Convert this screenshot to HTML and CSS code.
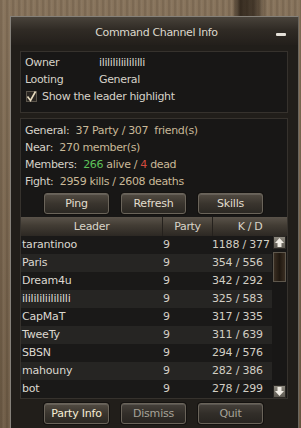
FILE: index.html
```html
<html>
    <head>
        <link rel="stylesheet" href="styles.css">
    </head>
    <body>
        <div class="window">
            <div class="titleBar">
                <span class="title">Command Channel Info</span>
                <span class="minimize"></span>
            </div>
            <div class="content">
                <div class="box infoBox">
                    <div class="line"><span class="label">Owner</span><span>ililililiilililli</span></div>
                    <div class="line"><span class="label">Looting</span><span>General</span></div>
                    <div class="line check">
                        <svg class="checkbox" width="11" height="11" viewBox="0 0 11 11">
                            <rect x="0.5" y="0.5" width="10" height="10" fill="#2a2622" stroke="#5c564c"/>
                            <path d="M1.5 5.5 L4.5 9.5 L9.5 0.5" fill="none" stroke="#e8dcc0" stroke-width="1.6"/>
                        </svg>
                        <span>Show the leader highlight</span>
                    </div>
                </div>
                <div class="box statsBox">
                    <div class="stats">
                        <div>General:&nbsp; <span class="val">37 Party / 307&nbsp; friend(s)</span></div>
                        <div>Near:&nbsp; <span class="val">270 member(s)</span></div>
                        <div>Members:&nbsp; <span class="green">266</span> <span class="val">alive /</span> <span class="red">4</span> <span class="val">dead</span></div>
                        <div>Fight:&nbsp; <span class="val">2959 kills / 2608 deaths</span></div>
                    </div>
                    <div class="buttonRow">
                        <button class="btn">Ping</button>
                        <button class="btn">Refresh</button>
                        <button class="btn">Skills</button>
                    </div>
                    <div class="tableHead">
                        <span class="colLeader">Leader</span>
                        <span class="colParty">Party</span>
                        <span class="colKd">K / D</span>
                    </div>
                    <div class="tableBody">
                        <ul class="rows">
                            <li><span class="name">tarantinoo</span><span class="party">9</span><span class="kd">1188 / 377</span></li>
                            <li><span class="name">Paris</span><span class="party">9</span><span class="kd">354 / 556</span></li>
                            <li><span class="name">Dream4u</span><span class="party">9</span><span class="kd">342 / 292</span></li>
                            <li><span class="name">ililililiilililli</span><span class="party">9</span><span class="kd">325 / 583</span></li>
                            <li><span class="name">CapMaT</span><span class="party">9</span><span class="kd">317 / 335</span></li>
                            <li><span class="name">TweeTy</span><span class="party">9</span><span class="kd">311 / 639</span></li>
                            <li><span class="name">SBSN</span><span class="party">9</span><span class="kd">294 / 576</span></li>
                            <li><span class="name">mahouny</span><span class="party">9</span><span class="kd">282 / 386</span></li>
                            <li><span class="name">bot</span><span class="party">9</span><span class="kd">278 / 299</span></li>
                        </ul>
                        <div class="scrollBar">
                            <div class="arrowBtn">
                                <svg width="13" height="13" viewBox="0 0 13 13"><path d="M6.5 2 L11 7 L8.5 7 L8.5 11 L4.5 11 L4.5 7 L2 7 Z" fill="#f0ece4"/></svg>
                            </div>
                            <div class="thumb"></div>
                            <div class="track"></div>
                            <div class="arrowBtn">
                                <svg width="13" height="13" viewBox="0 0 13 13"><path d="M6.5 11 L11 6 L8.5 6 L8.5 2 L4.5 2 L4.5 6 L2 6 Z" fill="#f0ece4"/></svg>
                            </div>
                        </div>
                    </div>
                </div>
                <div class="buttonRow bottomRow">
                    <button class="btn active">Party Info</button>
                    <button class="btn disabled">Dismiss</button>
                    <button class="btn disabled">Quit</button>
                </div>
            </div>
        </div>
    </body>
</html>
```

FILE: styles.css
```css
body {
    margin: 0;
    height: 428px;
    overflow: hidden;
    font-family: "DejaVu Sans", Verdana, sans-serif;
    font-size: 11px;
    letter-spacing: -0.35px;
    color: #d6d2c8;
    background:
        linear-gradient(90deg, transparent 0, transparent 232px, rgba(30,22,14,0.75) 240px, rgba(30,22,14,0.6) 255px, transparent 266px),
        repeating-linear-gradient(90deg, rgba(0,0,0,0.08) 0, rgba(0,0,0,0.08) 2px, rgba(255,255,255,0.05) 3px, transparent 6px),
        linear-gradient(180deg, #86725a 0, #6e5b45 100%);
}

/* window */
.window {
    margin: 16px 0 0 10px;
    width: 287px;
    height: 420px;
    background: #211e1a;
    border: 1px solid #85817a;
    border-bottom: none;
    border-right-color: #6a665e;
}
.titleBar {
    height: 28px;
    display: flex;
    align-items: center;
    justify-content: center;
    position: relative;
    background: linear-gradient(180deg, #48423a 0, #302b25 45%, #231f1b 100%);
}
.title {
    color: #dcd8cc;
    padding-left: 4px;
    padding-top: 2px;
}
.minimize {
    position: absolute;
    right: 12px;
    top: 16px;
    width: 10px;
    height: 3px;
    background: #e4e0d8;
    border-radius: 1px;
}
.content {
    padding: 6px 10px 0 9px;
}

/* boxes */
.box {
    background: #181716;
    border: 1px solid #36322d;
}
.infoBox {
    padding: 2px 4px 7px;
    margin-bottom: 5px;
}
.line {
    height: 17px;
    line-height: 17px;
    display: flex;
}
.line .label {
    width: 74px;
}
.check {
    align-items: center;
}
.checkbox {
    margin: 0 5px 0 1px;
}
.statsBox {
    padding-top: 3px;
}
.stats {
    padding-left: 4px;
    line-height: 17px;
}
.val {
    color: #c9b998;
}
.green {
    color: #5ec25a;
}
.red {
    color: #d24a3e;
}

/* buttons */
.buttonRow {
    display: flex;
    justify-content: center;
    gap: 12px;
    margin-top: 3px;
    padding-right: 1px;
}
.btn {
    width: 65px;
    height: 21px;
    padding: 0;
    font-family: inherit;
    font-size: 11px;
    letter-spacing: -0.2px;
    color: #e2dece;
    border: 1px solid #6a645a;
    border-radius: 3px;
    background: linear-gradient(180deg, #524b42 0, #3a352e 50%, #2b2823 100%);
    box-shadow: inset 0 1px 0 rgba(255,255,255,0.12), 0 0 0 1px #141210;
}
.btn.active {
    color: #f6eed6;
}
.btn.disabled {
    color: #a6a298;
    background: linear-gradient(180deg, #45403a 0, #322e29 50%, #282521 100%);
}
.bottomRow {
    margin-top: 4px;
}

/* table */
.tableHead {
    margin-top: 3px;
    height: 19px;
    display: grid;
    grid-template-columns: 141px 50px 1fr;
    line-height: 19px;
    text-align: center;
    color: #d8d4c8;
    background: linear-gradient(180deg, #5a534a 0, #423c34 45%, #2c2823 100%);
}
.tableHead > span + span {
    border-left: 1px solid #25211d;
}
.tableBody {
    display: flex;
}
.rows {
    list-style: none;
    margin: 0;
    padding: 0;
    width: 251px;
}
.rows > li {
    height: 18px;
    line-height: 18px;
    display: grid;
    grid-template-columns: 142px 49px 1fr;
    background: #1a1918;
    letter-spacing: -0.2px;
    white-space: nowrap;
}
.rows > li:nth-child(even) {
    background: #262523;
}
.name {
    padding-left: 1px;
    color: #dcd8d0;
}
.party, .kd {
    color: #d2cec4;
}

/* scroll bar */
.scrollBar {
    width: 14px;
    margin-left: 1px;
    display: flex;
    flex-direction: column;
    gap: 3px;
}
.arrowBtn {
    width: 13px;
    height: 13px;
    background: linear-gradient(180deg, #8c887e 0, #5e5a52 100%);
    border: 1px solid #2a2723;
    box-sizing: border-box;
    display: flex;
}
.arrowBtn svg {
    margin: -1px;
}
.thumb {
    width: 13px;
    height: 30px;
    box-sizing: border-box;
    border: 1px solid #5e574c;
    background: linear-gradient(90deg, #3a2e22 0, #201810 50%, #3a2e22 100%);
}
.track {
    flex: 1;
}
```
